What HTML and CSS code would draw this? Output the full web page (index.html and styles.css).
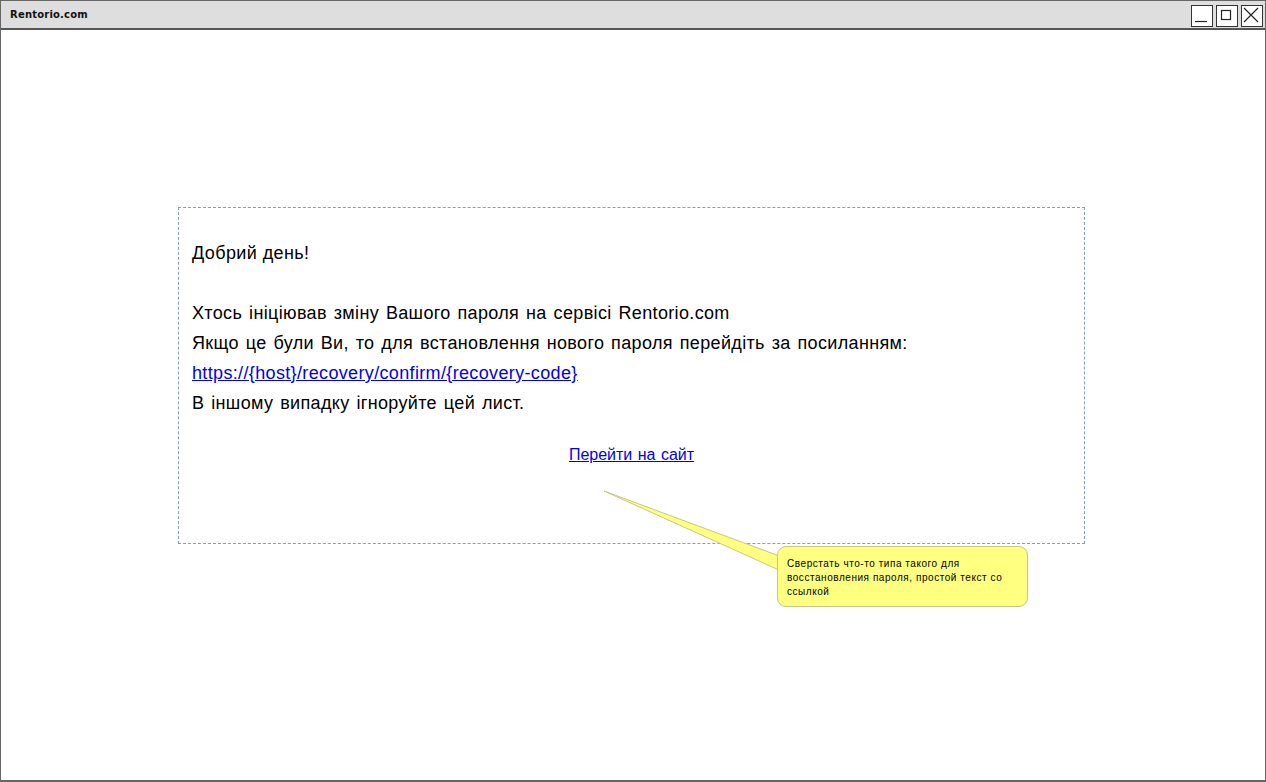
FILE: index.html
```html
<!DOCTYPE html>
<html lang="uk">
<head>
<meta charset="utf-8">
<title>Rentorio.com</title>
<link rel="stylesheet" href="styles.css">
</head>
<body>
<div class="window">
  <div class="titlebar">
    <span class="title">Rentorio.com</span>
    <div class="controls">
      <span class="ctl"><svg width="20" height="20" viewBox="0 0 20 20"><path d="M4 16.5H16" stroke="#222" stroke-width="1.2"/></svg></span>
      <span class="ctl"><svg width="20" height="20" viewBox="0 0 20 20"><rect x="5.5" y="5.5" width="9" height="9" fill="none" stroke="#222" stroke-width="1.2"/></svg></span>
      <span class="ctl"><svg width="20" height="20" viewBox="0 0 20 20"><path d="M3 3L17 17M17 3L3 17" stroke="#222" stroke-width="1.2"/></svg></span>
    </div>
  </div>
  <div class="content">
    <div class="mail">
      <p class="greet">Добрий день!</p>
      <p class="body">Хтось ініціював зміну Вашого пароля на сервісі Rentorio.com<br>
      Якщо це були Ви, то для встановлення нового пароля перейдіть за посиланням:<br>
      <a href="#">https://{host}/recovery/confirm/{recovery-code}</a><br>
      В іншому випадку ігноруйте цей лист.</p>
      <p class="site"><a href="#">Перейти на сайт</a></p>
    </div>
  </div>
  <svg class="pointer" width="1266" height="782" viewBox="0 0 1266 782">
    <path d="M604 491 L790 560 L790 575 Z" fill="#ffff80" stroke="#c6c68a" stroke-width="1"/>
  </svg>
  <div class="note">Сверстать что-то типа такого для восстановления пароля, простой текст со ссылкой</div>
</div>
</body>
</html>
```
FILE: styles.css
```css
html, body {
  margin: 0;
  padding: 0;
  background: #fff;
}
.window {
  position: relative;
  width: 1266px;
  height: 782px;
  box-sizing: border-box;
  border: 1px solid #666;
  border-bottom: 2px solid #666;
  overflow: hidden;
}
.titlebar {
  height: 27px;
  background: #dedede;
  border-bottom: 2px solid #555;
  display: flex;
  align-items: center;
  justify-content: space-between;
  padding: 0 2px 0 9px;
}
.title {
  font-family: "DejaVu Sans", sans-serif;
  font-weight: bold;
  font-size: 10px;
  color: #111;
  letter-spacing: 0.2px;
}
.controls {
  display: flex;
  gap: 3px;
  margin-top: 2px;
}
.ctl {
  width: 20px;
  height: 20px;
  border: 1px solid #333;
  background: #fff;
  display: block;
}
.ctl svg { display: block; margin: -1px; }
.content {
  padding-top: 177px;
  padding-left: 177px;
}
.mail {
  width: 907px;
  height: 337px;
  box-sizing: border-box;
  border: 1px dashed #7f9dc6;
  padding: 30px 0 0 13px;
  font-family: "Liberation Sans", Arial, sans-serif;
  color: #000;
}
.mail p { margin: 0; }
.greet {
  font-size: 18px;
  line-height: 30px;
  letter-spacing: 0.4px;
  margin-bottom: 30px !important;
}
.body {
  font-size: 18px;
  line-height: 30px;
  letter-spacing: 0.35px;
  word-spacing: 1.5px;
}
.mail a { color: #0000ee; text-decoration: underline; }
.site {
  text-align: center;
  font-size: 16px;
  line-height: 20px;
  margin-top: 27px !important;
  padding-right: 13px;
  word-spacing: 1px;
}
.pointer {
  position: absolute;
  left: -1px;
  top: -1px;
  pointer-events: none;
}
.note {
  position: absolute;
  left: 776px;
  top: 545px;
  width: 251px;
  height: 61px;
  box-sizing: border-box;
  background: #ffff80;
  border: 1px solid #c6c68a;
  border-radius: 9px;
  padding: 10px 8px 0 9px;
  font-family: "Liberation Sans", Arial, sans-serif;
  font-size: 10px;
  line-height: 14px;
  letter-spacing: 0.55px;
  color: #000;
}
```
